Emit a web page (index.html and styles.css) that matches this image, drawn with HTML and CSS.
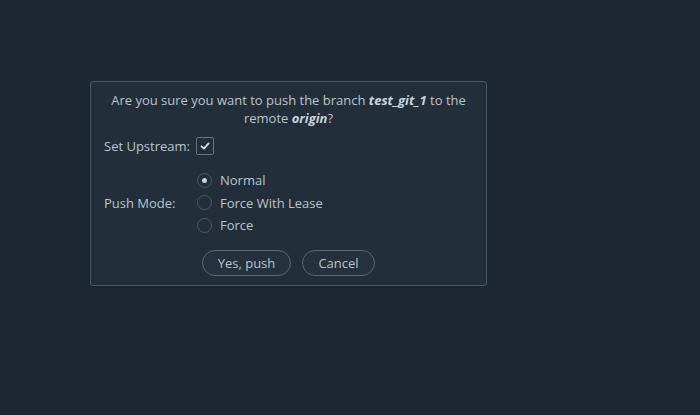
FILE: index.html
```html
<!DOCTYPE html>
<html>
<head>
<meta charset="utf-8">
<link rel="stylesheet" href="styles.css">
</head>
<body>
<div class="dialog">
  <p class="question">Are you sure you want to push the branch <b class="em">test_git_1</b> to the remote <b class="em">origin</b>?</p>
  <div class="form">
    <div class="label">Set Upstream:</div>
    <div class="field"><span class="checkbox"><svg width="12" height="12" viewBox="0 0 12 12"><path d="M2.5 6.3 L4.9 8.6 L9.6 3.4" fill="none" stroke="#d6dde2" stroke-width="1.8" stroke-linecap="round" stroke-linejoin="round"/></svg></span></div>
    <div class="label mode">Push Mode:</div>
    <div class="field radios">
      <label class="radio-row"><span class="radio checked"></span>Normal</label>
      <label class="radio-row"><span class="radio"></span>Force With Lease</label>
      <label class="radio-row"><span class="radio"></span>Force</label>
    </div>
  </div>
  <div class="buttons">
    <button class="btn yes">Yes, push</button>
    <button class="btn cancel">Cancel</button>
  </div>
</div>
</body>
</html>
```
FILE: styles.css
```css
html, body {
  margin: 0;
  padding: 0;
}
body {
  background: #1c2731;
  width: 700px;
  height: 415px;
  font-family: "Open Sans", "Noto Sans", sans-serif;
  font-size: 13px;
  color: #b9c5cd;
  padding: 81px 0 0 90px;
  box-sizing: border-box;
}
.dialog {
  width: 397px;
  box-sizing: border-box;
  background: #222e39;
  border: 1px solid #4a5660;
  border-radius: 3px;
  padding: 9px 13px 9px 13px;
}
.question {
  margin: 0;
  text-align: center;
  line-height: 18px;
}
.question .em {
  color: #c8d3da;
  font-weight: bold;
  font-style: italic;
  display: inline-block;
  line-height: 18px;
}
.form {
  display: grid;
  grid-template-columns: 84px 1fr;
  column-gap: 8px;
  row-gap: 13px;
  margin-top: 9px;
  align-items: center;
}
.label {
  line-height: 20px;
  white-space: nowrap;
}
.checkbox {
  display: flex;
  align-items: center;
  justify-content: center;
  width: 16px;
  height: 16px;
  border: 1px solid #68747e;
  border-radius: 2px;
  background: #222e39;
}
.radios {
  display: flex;
  flex-direction: column;
}
.radio-row {
  display: flex;
  align-items: center;
  gap: 8px;
  height: 22.5px;
  padding-left: 1px;
  white-space: nowrap;
}
.radio {
  width: 13px;
  height: 13px;
  border-radius: 50%;
  border: 1px solid #4d5963;
  background: #222e39;
  display: flex;
  align-items: center;
  justify-content: center;
}
.radio.checked::after {
  content: "";
  width: 5px;
  height: 5px;
  border-radius: 50%;
  background: #c9d2d8;
}
.buttons {
  display: flex;
  justify-content: center;
  gap: 11px;
  margin-top: 13px;
}
.btn {
  font-family: inherit;
  font-size: 13px;
  color: #b9c5cd;
  background: #25313c;
  border: 1px solid #5c6770;
  border-radius: 13px;
  height: 26px;
  padding: 0;
  white-space: nowrap;
}
.btn.yes {
  width: 89px;
}
.btn.cancel {
  width: 73px;
}
```
